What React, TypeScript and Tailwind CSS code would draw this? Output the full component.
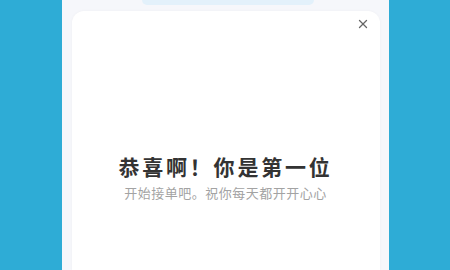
import React from 'react';
import { X } from 'lucide-react';

export default function App() {
  return (
    <div
      className="w-[450px] h-[270px] bg-[#2eacd6] flex justify-center overflow-hidden"
      style={{ fontFamily: '"Noto Sans CJK SC", "Noto Sans", sans-serif' }}
    >
      <div className="w-[327px] h-full bg-[#f6f7fb] flex flex-col">
        <div className="ml-[80px] w-[172px] h-[5px] rounded-b-full bg-[#e3f1fb]" />
        <div className="relative flex-1 mt-[6px] ml-[10px] mr-[9px] rounded-t-[12px] bg-white shadow-[0_0_3px_rgba(0,0,0,0.04)] flex flex-col items-center">
          <button className="absolute top-[6px] right-[10px] text-[#666]">
            <X className="w-[14px] h-[14px]" strokeWidth={2.2} />
          </button>
          <h1 className="mt-[141px] text-[21px] leading-[28px] font-bold tracking-[2.8px] text-[#333]">
            恭喜啊！你是第一位
          </h1>
          <p className="mt-[4px] text-[13px] leading-[18px] tracking-[0.5px] text-[#a3a3a3]">
            开始接单吧。祝你每天都开开心心
          </p>
        </div>
      </div>
    </div>
  );
}
